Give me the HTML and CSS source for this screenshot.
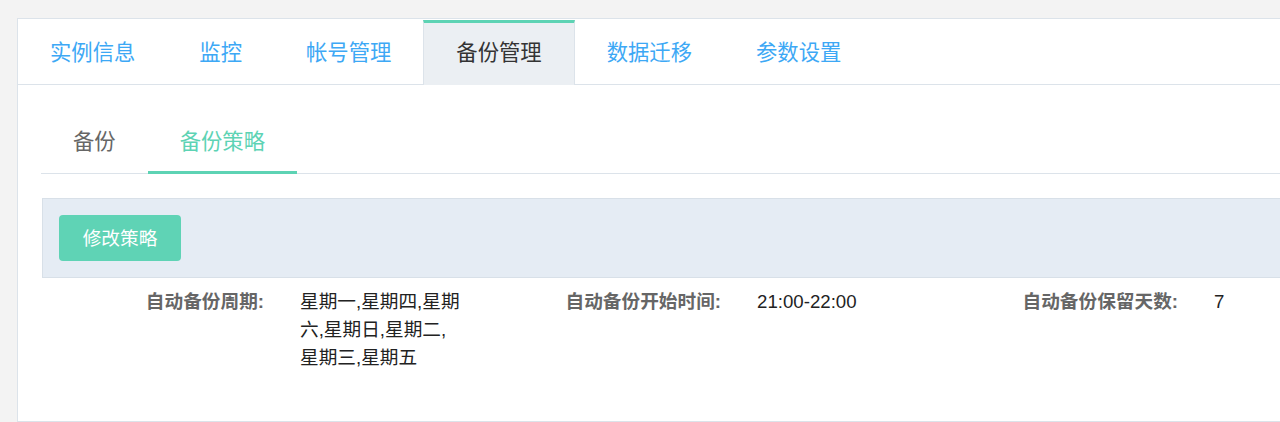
FILE: index.html
```html
<!DOCTYPE html>
<html lang="zh">
<head>
<meta charset="utf-8">
<title>备份管理</title>
<link rel="stylesheet" href="styles.css">
</head>
<body>
<div class="panel">
  <nav class="tabs">
    <a class="tab">实例信息</a>
    <a class="tab">监控</a>
    <a class="tab">帐号管理</a>
    <a class="tab active">备份管理</a>
    <a class="tab">数据迁移</a>
    <a class="tab">参数设置</a>
  </nav>
  <div class="content">
    <nav class="subtabs">
      <a class="subtab">备份</a>
      <a class="subtab active">备份策略</a>
    </nav>
    <div class="toolbar">
      <button class="btn">修改策略</button>
    </div>
    <div class="info">
      <div class="item">
        <div class="label">自动备份周期:</div>
        <div class="value">星期一,星期四,星期六,星期日,星期二,星期三,星期五</div>
      </div>
      <div class="item">
        <div class="label">自动备份开始时间:</div>
        <div class="value">21:00-22:00</div>
      </div>
      <div class="item">
        <div class="label">自动备份保留天数:</div>
        <div class="value">7</div>
      </div>
    </div>
  </div>
</div>
</body>
</html>
```
FILE: styles.css
```css
html, body {
  margin: 0;
  padding: 0;
}
body {
  background: #f3f3f3;
  padding: 18px 0 0 17px;
  overflow: hidden;
  font-family: "Liberation Sans", "Noto Sans CJK SC", sans-serif;
  height: 422px;
  box-sizing: border-box;
}
.panel {
  width: 1320px;
  background: #fff;
  border: 1px solid #dce3ea;
  height: 404px;
  box-sizing: border-box;
}
.tabs {
  display: flex;
  height: 66px;
  border-bottom: 1px solid #dce3ea;
  box-sizing: border-box;
}
.tab {
  display: block;
  padding: 4px 32px 0;
  height: 65px;
  box-sizing: border-box;
  font-size: 21.33px;
  line-height: 61px;
  color: #3da8f5;
  cursor: pointer;
}
.tab.active {
  color: #333;
  background: #ebeff3;
  border-left: 1px solid #dce3ea;
  border-right: 1px solid #dce3ea;
  border-top: 3px solid #5dd3b4;
  margin-top: 1px;
  padding-top: 0;
  line-height: 61px;
  height: 65px;
  margin-bottom: -1px;
}
.content {
  padding: 24px 0 0 24px;
}
.subtabs {
  display: flex;
  height: 65px;
  border-bottom: 1px solid #dce3ea;
  box-sizing: border-box;
  margin-left: -1px;
}
.subtab {
  display: block;
  padding: 2px 32px 0;
  font-size: 21.33px;
  line-height: 62px;
  height: 65px;
  box-sizing: border-box;
  color: #666;
  cursor: pointer;
}
.subtab.active {
  color: #5dd3b4;
  border-bottom: 3px solid #5dd3b4;
  margin-bottom: -1px;
}
.toolbar {
  margin-top: 24px;
  background: #e5ecf4;
  border: 1px solid #d8e0e8;
  padding: 16px;
}
.btn {
  display: block;
  width: 122px;
  height: 46px;
  border: none;
  border-radius: 4px;
  background: #5fd3b5;
  color: #fff;
  font-family: "Liberation Sans", "Noto Sans CJK SC", sans-serif;
  font-size: 18.67px;
  padding: 0 0 4px;
  cursor: pointer;
}
.info {
  display: grid;
  grid-template-columns: repeat(3, 457px);
  margin-top: 10px;
  font-size: 18.67px;
  line-height: 28px;
}
.item {
  display: flex;
  align-items: flex-start;
}
.label {
  width: 222px;
  text-align: right;
  font-weight: 700;
  color: #666;
  flex: none;
}
.value {
  width: 162px;
  margin-left: 36px;
  color: #222;
}
```
